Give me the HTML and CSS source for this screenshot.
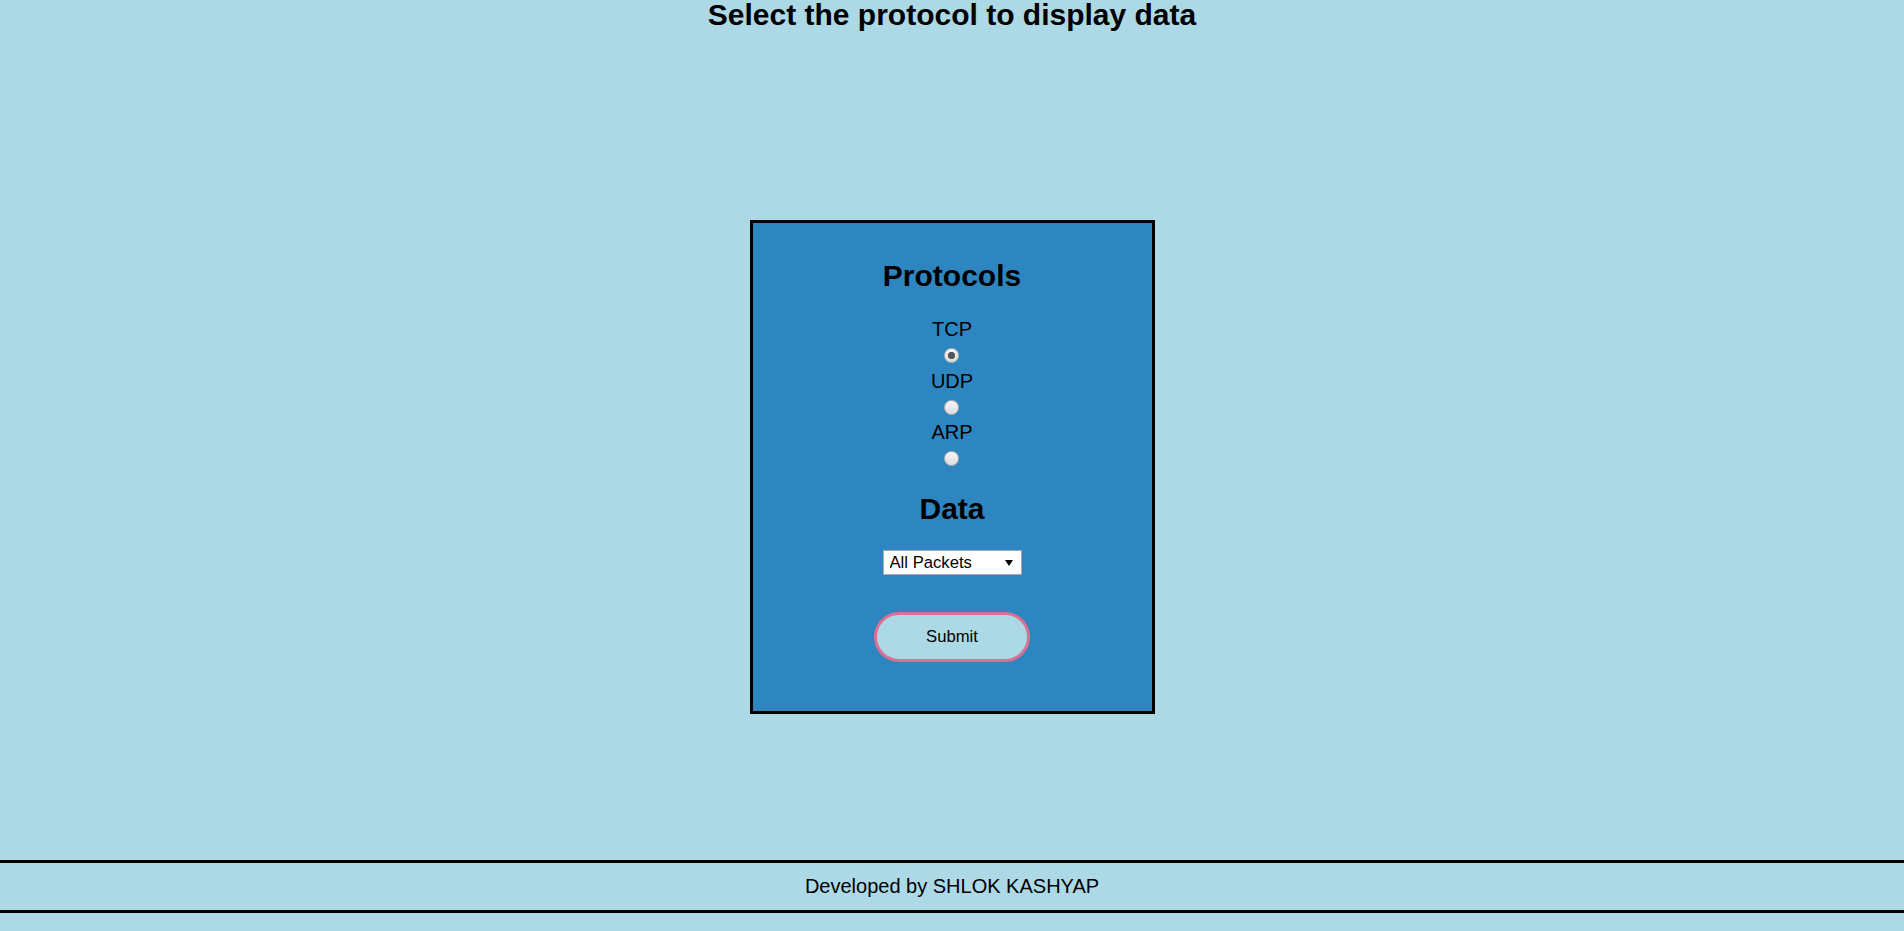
FILE: index.html
```html
<!DOCTYPE html>
<html lang="en">
<head>
<meta charset="utf-8">
<title>Protocol Data</title>
<link rel="stylesheet" href="styles.css">
</head>
<body>
  <h2 class="page-title">Select the protocol to display data</h2>
  <form class="panel">
    <h2 class="panel-heading panel-heading-first">Protocols</h2>
    <div class="radio-group">
      <label class="radio-label" for="tcp">TCP</label>
      <input class="radio" type="radio" id="tcp" name="protocol" value="tcp" checked>
      <label class="radio-label" for="udp">UDP</label>
      <input class="radio" type="radio" id="udp" name="protocol" value="udp">
      <label class="radio-label" for="arp">ARP</label>
      <input class="radio" type="radio" id="arp" name="protocol" value="arp">
    </div>
    <h2 class="panel-heading panel-heading-data">Data</h2>
    <span class="select-wrap">
      <select class="select" name="data">
        <option>All Packets</option>
      </select>
    </span>
    <button class="submit" type="button">Submit</button>
  </form>
  <footer class="footer">Developed by SHLOK KASHYAP</footer>
</body>
</html>
```

FILE: styles.css
```css
html, body {
  margin: 0;
  padding: 0;
}

body {
  background: #add8e6;
  font-family: "Liberation Sans", Arial, sans-serif;
  font-size: 20px;
  color: #000;
}

.page-title {
  margin: 0;
  font-size: 30px;
  line-height: 30px;
  font-weight: bold;
  text-align: center;
}

.panel {
  box-sizing: content-box;
  width: 399px;
  margin: 190px auto 0;
  padding: 0 0 49px;
  background: #2e86c1;
  border: 3px solid #000;
  display: flex;
  flex-direction: column;
  align-items: center;
}

.panel-heading {
  font-size: 30px;
  line-height: 35px;
  font-weight: bold;
  margin: 0;
}

.panel-heading-first {
  margin: 35px 0 25px;
}

.panel-heading-data {
  margin: 18.5px 0 24px;
}

.radio-group {
  display: flex;
  flex-direction: column;
  align-items: center;
}

.radio-label {
  display: block;
  line-height: 23px;
  font-size: 20px;
}

.radio {
  -webkit-appearance: none;
  appearance: none;
  display: block;
  width: 15px;
  height: 15px;
  margin: 7px 0 6.5px;
  border-radius: 50%;
  border: 1px solid #b4b4b4;
  box-sizing: border-box;
  background: linear-gradient(#f7f7f7, #dcdcdc);
}

.radio:checked {
  background:
    radial-gradient(circle, #555 0, #555 3.3px, transparent 4px),
    linear-gradient(#f7f7f7, #dcdcdc);
}

.select-wrap {
  position: relative;
  display: block;
  width: 139px;
  height: 25px;
}

.select-wrap::after {
  content: "";
  position: absolute;
  right: 9px;
  top: 10px;
  width: 0;
  height: 0;
  border-left: 4px solid transparent;
  border-right: 4px solid transparent;
  border-top: 6px solid #000;
  pointer-events: none;
}

.select {
  -webkit-appearance: none;
  appearance: none;
  box-sizing: border-box;
  width: 139px;
  height: 25px;
  margin: 0;
  padding: 0 0 0 6px;
  border: 1px solid #a9a9a9;
  border-radius: 0;
  background: #fff;
  color: #000;
  font-family: "Liberation Sans", Arial, sans-serif;
  font-size: 16.67px;
  line-height: 23px;
}

.submit {
  box-sizing: border-box;
  width: 156px;
  height: 50px;
  margin-top: 37px;
  padding: 0;
  border: 3px solid #db7093;
  border-radius: 25px;
  background: #add8e6;
  color: #000;
  font-family: "Liberation Sans", Arial, sans-serif;
  font-size: 16.67px;
}

.footer {
  margin: 146px 0 19px;
  padding: 12px 0;
  border-top: 3px solid #000;
  border-bottom: 3px solid #000;
  text-align: center;
  font-size: 20px;
  line-height: 23px;
}
```
